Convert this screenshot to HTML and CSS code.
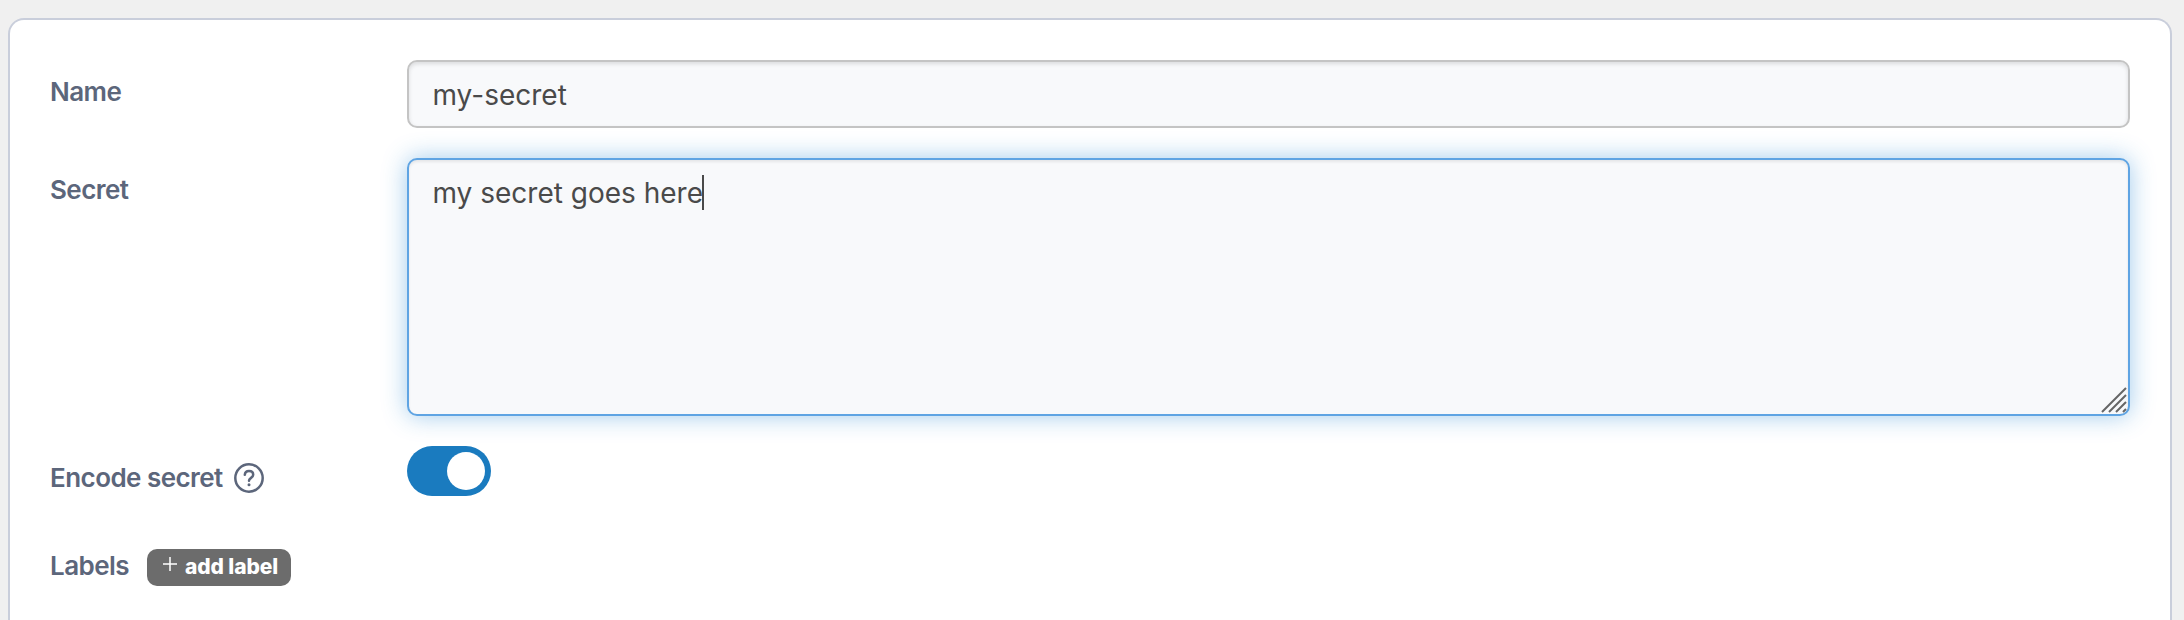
FILE: index.html
```html
<!DOCTYPE html>
<html lang="en">
<head>
<meta charset="utf-8">
<title>Secret</title>
<link rel="stylesheet" href="styles.css">
</head>
<body>
<main class="card">
  <div class="row row-name">
    <span class="label">Name</span>
    <div class="field">my-secret</div>
  </div>
  <div class="row row-secret">
    <span class="label">Secret</span>
    <div class="field area"><span>my secret goes here</span><i class="caret"></i>
      <svg class="grip" width="26" height="26" viewBox="0 0 26 26"><path d="M1 25 25 1M8 25 25 8M15 25 25 15M22 25 25 22"/></svg>
    </div>
  </div>
  <div class="row row-encode">
    <span class="label"><span class="label-text">Encode secret</span>
      <svg class="help" width="30" height="30" viewBox="0 0 30 30"><circle cx="15" cy="15" r="13.700"/><path d="M10.800 11.800C11 9.400 12.700 8 15 8c2.400 0 4.200 1.400 4.200 3.700 0 3.300-4.200 3-4.200 6.100"/><circle class="dot" cx="15" cy="21.700" r="1.500"/></svg>
    </span>
    <div class="toggle"><span class="knob"></span></div>
  </div>
  <div class="row row-labels">
    <span class="label-inline">Labels</span>
    <div class="add"><svg class="plus" width="14" height="14" viewBox="0 0 14 14"><path d="M7 0v14M0 7h14"/></svg><span class="add-text">add label</span></div>
  </div>
</main>
</body>
</html>
```
FILE: styles.css
```css
* { box-sizing: border-box; }
body {
  margin: 0;
  height: 620px;
  overflow: hidden;
  background: #f0f0f0;
  padding: 18px 12px 0 8px;
  font-family: Inter, sans-serif;
}
.card {
  height: 602px;
  background: #fff;
  border: 2px solid #c9cedb;
  border-bottom: 0;
  border-radius: 16px 16px 0 0;
  padding: 40px 40px 0;
}
.row { display: flex; align-items: flex-start; }
.row-name { height: 98px; }
.row-secret { height: 288px; }
.row-encode { height: 103px; }
.label {
  width: 357px;
  flex: none;
  display: flex;
  padding-top: 16px;
}
.label, .label-inline {
  color: #5c667b;
  font-size: 26px;
  font-weight: 570;
  letter-spacing: -0.55px;
  line-height: 32px;
  white-space: nowrap;
}
.label-text { width: 172px; }
.label-inline { width: 79px; padding-top: 1px; }
.field {
  position: relative;
  flex: 1;
  height: 68px;
  padding: 15px 23.500px;
  border: 2px solid #c4c4c4;
  border-radius: 10px;
  background: #f8f9fb;
  box-shadow: inset 0 2px 4px rgba(0, 0, 0, .12);
  color: #4a4a4a;
  font-size: 28px;
  line-height: 36px;
  white-space: nowrap;
}
.area {
  display: flex;
  align-items: flex-start;
  height: 258px;
  border-color: #5fa4e3;
  box-shadow: inset 0 2px 3px rgba(0, 0, 0, .08), 0 0 24px rgba(32, 130, 210, .42);
}
.caret { width: 2px; height: 35px; margin-left: -0.5px; background: #4a4a4a; }
.grip { position: absolute; right: 1px; bottom: 1px; }
.grip path { stroke: #666; stroke-width: 2; fill: none; }
.help { margin: 1px 0 0 12px; fill: none; stroke: #5c667b; stroke-width: 2.500; stroke-linecap: round; }
.help .dot { fill: #5c667b; stroke: none; }
.toggle {
  width: 84px;
  height: 50px;
  padding: 6px;
  border-radius: 25px;
  background: #1a7bbf;
  display: flex;
  justify-content: flex-end;
}
.knob { width: 38px; height: 38px; border-radius: 50%; background: #fff; }
.add {
  width: 144px;
  height: 37px;
  margin-left: 18px;
  padding: 8px 0 0 15.500px;
  display: flex;
  border-radius: 10px;
  background: #6c6c6c;
  color: #fff;
}
.plus { flex: none; stroke: #fff; stroke-width: 1.500; }
.add-text { margin: -3px 0 0 8.500px; font-size: 21px; font-weight: 800; letter-spacing: -0.1px; line-height: 26px; white-space: nowrap; }
```
